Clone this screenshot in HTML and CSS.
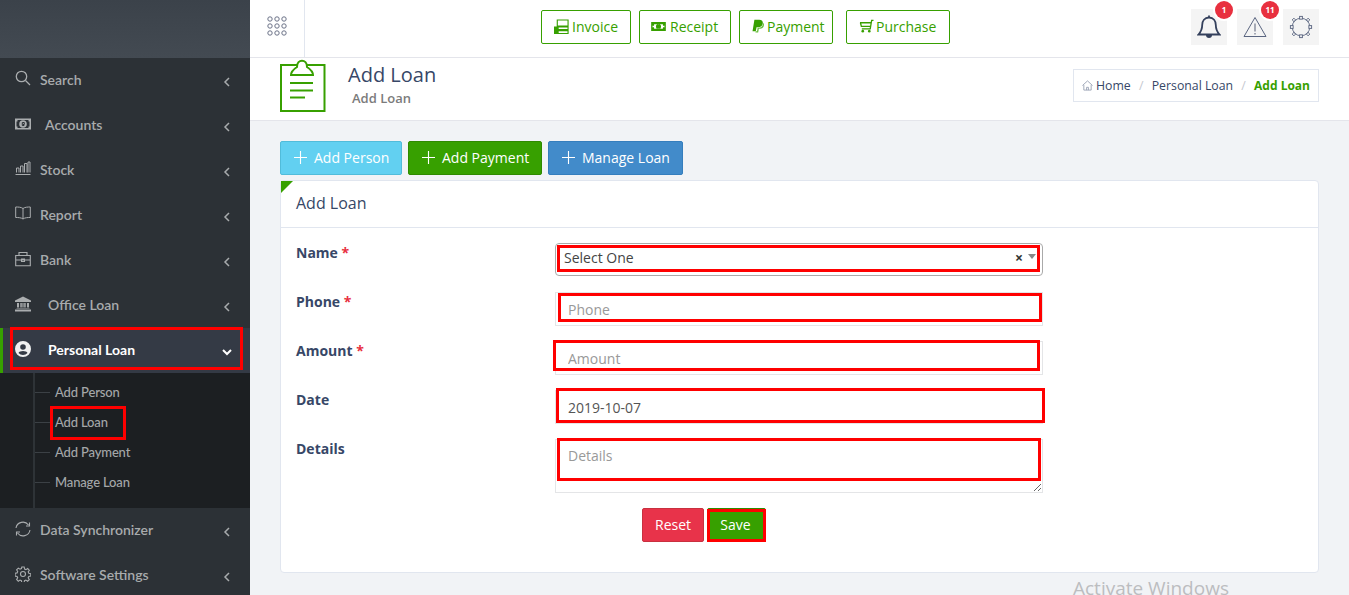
FILE: index.html
```html
<!DOCTYPE html>
<html lang="en">
<head>
<meta charset="utf-8">
<title>Add Loan</title>
<link rel="stylesheet" href="styles.css">
</head>
<body>
<div class="app">
  <aside class="sidebar">
    <div class="brand"></div>
    <nav class="menu">
      <a class="item"><svg class="ic up" viewBox="0 0 16 16"><circle cx="6.500" cy="6.500" r="5.200"/><path d="M10.500 10.500l4.500 4.500"/></svg><span>Search</span><svg class="chev" viewBox="0 0 8 12"><path d="M6 2L2 6l4 4"/></svg></a>
      <a class="item"><svg class="ic" viewBox="0 0 16 12"><path class="solid" fill-rule="evenodd" d="M0 .5h16v11H0zM2.500 2v1.500H1.500v5h1V10h11V8.500h1v-5h-1V2z"/><circle class="solid" cx="8" cy="6" r="3.800"/><path d="M9.300 4.500H7.300v3h2M9.300 4.500v2H8" stroke="#2c3136" stroke-width="1"/></svg><span class="wide1">Accounts</span><svg class="chev" viewBox="0 0 8 12"><path d="M6 2L2 6l4 4"/></svg></a>
      <a class="item"><svg class="ic up" viewBox="0 0 16 14"><path d="M0.500 13.500h15M1.500 11.500V7h2.500v4.500M5.500 11.500V5h2.500v6.500M9.500 11.500V2.500h2.500v9M13 11.500V1h2v10.500" stroke-width="1"/></svg><span>Stock</span><svg class="chev" viewBox="0 0 8 12"><path d="M6 2L2 6l4 4"/></svg></a>
      <a class="item"><svg class="ic up" viewBox="0 0 16 14"><path d="M8 2.500C6 1 3 1 .7 1v10.500c2.500 0 5.300 0 7.300 1.500 2-1.500 4.800-1.500 7.300-1.500V1C13 1 10 1 8 2.500zM8 2.500V13" stroke-width="1"/></svg><span>Report</span><svg class="chev" viewBox="0 0 8 12"><path d="M6 2L2 6l4 4"/></svg></a>
      <a class="item"><svg class="ic" viewBox="0 0 16 15"><path d="M.7 4h14.600v10.300H.7zM4 4V1h8v3M.7 8.500h14.600M6.500 7.500h3v2.500h-3z" stroke-width="1.100"/></svg><span>Bank</span><svg class="chev" viewBox="0 0 8 12"><path d="M6 2L2 6l4 4"/></svg></a>
      <a class="item"><svg class="ic" viewBox="0 0 16 15"><path class="solid" d="M8 0l8 4v1.500H0V4zM0 13h16v2H0zM1.500 11.500h13V12h-13zM2 6.500h2v4.500H2zM5.300 6.500h1.500v4.500H5.300zM9.200 6.500h1.500v4.500H9.200zM12 6.500h2v4.500h-2zM7.400 6.500h1.200v4.500H7.400z"/></svg><span class="wide2">Office Loan</span><svg class="chev" viewBox="0 0 8 12"><path d="M6 2L2 6l4 4"/></svg></a>
      <a class="item active"><svg class="ic" viewBox="0 0 16 16"><path class="solidw" fill-rule="evenodd" d="M8 0a8 8 0 1 0 0 16A8 8 0 0 0 8 0zm0 3.200a2.800 2.800 0 1 1 0 5.600 2.800 2.800 0 0 1 0-5.600zM8 14a6 6 0 0 1-4.500-2.100C4 10.700 6 10 8 10s4 .7 4.500 1.900A6 6 0 0 1 8 14z"/></svg><span class="wide2">Personal Loan</span><svg class="chev" viewBox="0 0 12 8"><path d="M2 2l4 4 4-4"/></svg><i class="mark m-active"></i></a>
      <div class="submenu">
        <a class="sub">Add Person</a>
        <a class="sub">Add Loan<i class="mark m-sub"></i></a>
        <a class="sub">Add Payment</a>
        <a class="sub">Manage Loan</a>
      </div>
      <a class="item"><svg class="ic" viewBox="0 0 16 15"><path d="M1 6.500A7 7 0 0 1 13.500 3.500M15 8.500A7 7 0 0 1 2.500 11.500M14.500 1v3.500H11M1.500 14v-3.500H5" stroke-width="1.100"/></svg><span>Data Synchronizer</span><svg class="chev" viewBox="0 0 8 12"><path d="M6 2L2 6l4 4"/></svg></a>
      <a class="item"><svg class="ic" viewBox="0 0 16 16"><circle cx="8" cy="8" r="2.500" stroke-width="1.100"/><path d="M6.800 1h2.400l.4 2 1.300.6 1.800-1.100 1.600 1.700-1.100 1.700.6 1.400 2 .4v2.400l-2 .4-.6 1.300 1.100 1.800-1.700 1.600-1.700-1.100-1.400.6-.4 2H6.800l-.4-2-1.400-.6-1.700 1.100-1.700-1.700 1.100-1.700-.6-1.300-2-.4V7.300l2-.4.600-1.400-1.100-1.700 1.700-1.700 1.700 1.100 1.400-.6z" stroke-width="1.100"/></svg><span>Software Settings</span><svg class="chev" viewBox="0 0 8 12"><path d="M6 2L2 6l4 4"/></svg></a>
    </nav>
  </aside>

  <main class="main">
    <header class="topbar">
      <div class="grid-btn">
        <svg width="20" height="20" viewBox="0 0 20 20"><g fill="none" stroke="#6b7287" stroke-width="1"><circle cx="3" cy="3" r="2.200"/><circle cx="10" cy="3" r="2.200"/><circle cx="17" cy="3" r="2.200"/><circle cx="3" cy="10" r="2.200"/><circle cx="10" cy="10" r="2.200"/><circle cx="17" cy="10" r="2.200"/><circle cx="3" cy="17" r="2.200"/><circle cx="10" cy="17" r="2.200"/><circle cx="17" cy="17" r="2.200"/></g></svg>
      </div>
      <div class="quick">
        <a class="qbtn q1"><svg viewBox="0 0 16 16" width="15" height="15"><path d="M3.500 1h11.500v6.500H3.500zM.5 8.500H15v2.800H.5zM.5 12.500H15v3H.5z" fill="none" stroke="#37a000" stroke-width="1.200"/><path d="M.5 8.500H5v7H.5z" fill="#37a000"/></svg>Invoice</a>
        <a class="qbtn q2"><svg viewBox="0 0 16 12" width="15" height="11"><path fill="#37a000" fill-rule="evenodd" d="M0 1h16v10H0zM3 3.500a1 1 0 0 1-1.500 1.500v2A1 1 0 0 1 3 8.500h10A1 1 0 0 1 14.500 7V5A1 1 0 0 1 13 3.500zM8 3.200a2.800 2.800 0 1 1 0 5.600 2.800 2.800 0 0 1 0-5.600z"/><path fill="#37a000" d="M7.500 4.500h1v3h-1z"/></svg>Receipt</a>
        <a class="qbtn q3"><svg viewBox="0 0 14 16" width="12" height="15"><path fill="#37a000" d="M2.800 0h5.600c3 0 4.700 1.600 4.200 4.400-.5 2.900-2.500 4.400-5.300 4.400H5.300l-.9 4.700H.6z"/><path fill="#6cc041" d="M12.900 3.500c1 .7 1.300 1.900 1 3.300-.5 2.500-2.200 3.700-4.500 3.700H8l-.8 4.500H4l.3-1.500h1.500l.8-4h1c2.900 0 4.900-1.600 5.300-5z"/></svg>Payment</a>
        <a class="qbtn q4"><svg viewBox="0 0 16 15" width="15" height="14"><path d="M15.500 1.500h-2l-1.500 9H3M1 4h12M1.500 4l1 4h10" fill="none" stroke="#37a000" stroke-width="1.400"/><circle cx="4" cy="13" r="1.400" fill="#37a000"/><circle cx="11" cy="13" r="1.400" fill="#37a000"/></svg>Purchase</a>
      </div>
      <div class="tools">
        <a class="tool"><svg viewBox="0 0 24 26" width="24" height="26"><path d="M12 1.500v2M12 3.500c-4.500 0-6.800 3.500-6.800 7.500 0 4-1 6.500-3.700 9.500h21c-2.700-3-3.700-5.500-3.700-9.500 0-4-2.300-7.500-6.800-7.500z" fill="none" stroke="#34405c" stroke-width="1.800"/><path d="M9 21a3 3 0 0 0 6 0z" fill="#34405c"/></svg><b class="badge">1</b></a>
        <a class="tool"><svg viewBox="0 0 24 22" width="24" height="22"><path d="M12 1.500L1 20.500h22z" fill="none" stroke="#5a6580" stroke-width="1"/><path d="M12 7.500v8M12 17v1.500" stroke="#8a90a0" stroke-width="1.500"/></svg><b class="badge">11</b></a>
        <a class="tool"><svg viewBox="0 0 26 26" width="24" height="24"><circle cx="13" cy="13" r="9.500" fill="none" stroke="#5a6580" stroke-width="1"/><g fill="#f4f4f4" stroke="#5a6580"><rect x="11.500" y="1.500" width="3" height="3"/><rect x="11.500" y="21.500" width="3" height="3"/><rect x="1.500" y="11.500" width="3" height="3"/><rect x="21.500" y="11.500" width="3" height="3"/><rect x="4" y="4" width="2.600" height="2.600" transform="rotate(45 5.300 5.300)"/><rect x="19.400" y="4" width="2.600" height="2.600" transform="rotate(45 20.700 5.300)"/><rect x="4" y="19.400" width="2.600" height="2.600" transform="rotate(45 5.300 20.700)"/><rect x="19.400" y="19.400" width="2.600" height="2.600" transform="rotate(45 20.700 20.700)"/></g></svg></a>
      </div>
    </header>

    <section class="pagehead">
      <svg class="pageicon" viewBox="0 0 46 54" width="46" height="54"><path d="M1 7h43.500v46H1z" fill="#fff" stroke="#37a000" stroke-width="2"/><path d="M11 17c0-4 3-6 6-8 0-8.500 10-8.500 10 0 3 2 6 4 6 8z" fill="#fff" stroke="#37a000" stroke-width="2"/><path d="M10 25h23M10 32.500h23M10 39.500h15" stroke="#37a000" stroke-width="2"/></svg>
      <div class="pagetitle">
        <h1>Add Loan</h1>
        <p>Add Loan</p>
      </div>
      <ol class="crumbs">
        <li><svg viewBox="0 0 12 12" width="11" height="11"><path d="M.5 6L6 1l5.500 5M2 5.500V11h8V5.500M5 11V8h2v3" fill="none" stroke="#9aa3b5" stroke-width="1"/></svg>Home</li>
        <li class="sep">/</li>
        <li>Personal Loan</li>
        <li class="sep">/</li>
        <li class="cur">Add Loan</li>
      </ol>
    </section>

    <section class="content">
      <div class="actions">
        <a class="abtn info"><svg viewBox="0 0 14 14"><path d="M7 0v14M0 7h14"/></svg>Add Person</a>
        <a class="abtn green"><svg viewBox="0 0 14 14"><path d="M7 0v14M0 7h14"/></svg>Add Payment</a>
        <a class="abtn blue"><svg viewBox="0 0 14 14"><path d="M7 0v14M0 7h14"/></svg>Manage Loan</a>
      </div>
      <div class="card">
        <i class="corner"></i>
        <div class="card-head">Add Loan</div>
        <form class="form">
          <div class="row">
            <label>Name <em>*</em></label>
            <div class="field select">
              <span>Select One</span><b class="x">×</b><i class="caret"></i>
              <i class="mark m-select"></i>
            </div>
          </div>
          <div class="row">
            <label>Phone <em>*</em></label>
            <div class="field"><input placeholder="Phone"><i class="mark m-phone"></i></div>
          </div>
          <div class="row">
            <label>Amount <em>*</em></label>
            <div class="field"><input placeholder="Amount"><i class="mark m-amount"></i></div>
          </div>
          <div class="row">
            <label>Date</label>
            <div class="field"><input value="2019-10-07"><i class="mark m-date"></i></div>
          </div>
          <div class="row">
            <label>Details</label>
            <div class="field area"><textarea placeholder="Details"></textarea><i class="mark m-details"></i></div>
          </div>
          <div class="btns">
            <button type="button" class="reset">Reset</button>
            <button type="button" class="save">Save<i class="mark m-save"></i></button>
          </div>
        </form>
      </div>
    </section>
    <div class="watermark">Activate Windows</div>
  </main>
</div>
</body>
</html>
```
FILE: styles.css
```css
* { box-sizing: border-box; }
html, body { margin: 0; height: 595px; overflow: hidden; }
body { font-family: "Open Sans", sans-serif; background: #f1f3f6; color: #374767; font-size: 14px; }
a { display: block; }
.app { display: flex; height: 595px; }

.sidebar { width: 250px; flex: none; background: #2c3136; overflow: hidden; }
.brand { height: 58px; background: linear-gradient(#3b424a, #434a52); }
.menu { display: flex; flex-direction: column; }
.item { position: relative; height: 45px; flex: none; display: flex; align-items: center; padding: 0 19px 0 15px; color: #a8abad; font: 600 14px/1 "Lato", sans-serif; }
.item span { margin: 0 0 1px 9px; flex: 1; }
.item span.wide1 { margin-left: 14px; }
.item span.wide2 { margin-left: 17px; }
.ic { width: 16px; height: 16px; fill: none; stroke: #aaadaf; stroke-width: 1.300; flex: none; margin-bottom: 3px; }
.ic.up { margin-bottom: 5px; }
.ic .solid { fill: #aaadaf; stroke: none; }
.ic .solidw { fill: #f0f0f0; stroke: none; }
.chev { width: 8px; height: 12px; fill: none; stroke: #a8abad; stroke-width: 1.500; margin-top: 3px; }
.item.active { background: #343a45; color: #fff; border-left: 3px solid #37a000; padding-left: 12px; font-weight: 700; }
.item.active .chev { width: 12px; height: 8px; stroke: #fff; stroke-width: 2; margin: 2px -2px 0 0; }
.submenu { height: 135px; flex: none; background: #1c1f22; padding-top: 4px; position: relative; }
.submenu::before { content: ""; position: absolute; left: 33px; top: 0; bottom: 0; width: 2px; background: #2e3337; }
.sub { position: relative; height: 30px; padding-left: 55px; color: #a4a7a9; font: 500 13px/30px "Lato", sans-serif; letter-spacing: -.15px; }
.sub::before { content: ""; position: absolute; left: 35px; top: 15px; width: 15px; height: 1px; background: #3b4045; }

.mark { position: absolute; border: 3px solid #f00; pointer-events: none; display: block; }
.m-active { left: 7px; top: -1px; width: 233px; height: 43px; }
.m-sub { left: 50px; top: -1px; width: 76px; height: 34px; }
.m-select { left: 1px; top: 1px; width: 483px; height: 27px; }
.m-phone { left: 3px; top: 1px; width: 484px; height: 29px; }
.m-amount { left: -2px; top: -1px; width: 487px; height: 31px; }
.m-date { left: 1px; top: -2px; width: 489px; height: 35px; }
.m-details { left: 2px; top: -1px; width: 484px; height: 43px; }
.m-save { left: -1px; top: 0; width: 59px; height: 33px; }

.main { flex: 1; min-width: 0; position: relative; display: flex; flex-direction: column; }
.topbar { height: 58px; flex: none; display: flex; background: #fff; border-bottom: 1px solid #e4e5eb; }
.grid-btn { width: 55px; flex: none; border-right: 1px solid #e1e6ef; padding: 16px 0 0 17px; }
.quick { display: flex; margin-left: 236px; padding-top: 10px; }
.qbtn { height: 34px; display: flex; align-items: center; gap: 3px; padding: 0 0 2px 12px; border: 1px solid #37a000; border-radius: 2px; background: #fff; color: #37a000; font-size: 14px; }
.q1 { width: 90px; margin-right: 8px; }
.q2 { width: 92px; margin-right: 8px; padding-left: 11px; gap: 4px; }
.q3 { width: 94px; margin-right: 13px; }
.q4 { width: 104px; gap: 2px; }
.tools { margin-left: auto; margin-right: 30px; display: flex; gap: 10px; padding-top: 9px; }
.tool { position: relative; width: 36px; height: 36px; background: #f4f4f4; display: flex; align-items: center; justify-content: center; }
.badge { position: absolute; left: 24px; top: -8px; width: 18px; height: 18px; border-radius: 50%; background: #e8303f; box-shadow: 0 0 0 2px #fff; color: #fff; font: 700 8px/18px "Open Sans", sans-serif; text-align: center; }

.pagehead { height: 63px; flex: none; position: relative; background: #fff; border-bottom: 1px solid #e4e5eb; display: flex; padding: 0 30px; }
.pagetitle { margin-left: 22px; }
.pagetitle h1 { margin: 5px 0 0; font-size: 20px; font-weight: 500; line-height: 24px; color: #374767; }
.pagetitle p { margin: 3px 0 0 4px; font-size: 13px; font-weight: 600; line-height: 16px; color: #7b7b7b; }
.crumbs { list-style: none; margin: 11px 0 0 auto; padding: 0 8px; height: 33px; width: 246px; display: flex; justify-content: space-between; align-items: center; border: 1px solid #e1e6ef; font-size: 12.300px; white-space: nowrap; }
.crumbs svg { margin-right: 3px; vertical-align: -1px; }
.crumbs .sep { color: #c5c8cf; }
.crumbs .cur { color: #37a000; font-weight: 700; font-size: 12px; }

.content { flex: 1; padding: 20px 30px 0 30px; }
.actions { display: flex; gap: 6px; height: 34px; }
.abtn { height: 34px; display: flex; align-items: center; border-radius: 2px; color: #fff; font-size: 14px; padding: 0 0 2px 13px; }
.abtn svg { width: 13px; height: 13px; fill: none; stroke: #fff; stroke-width: 1.200; margin-right: 7px; }
.info { width: 122px; background: #62d0f1; border: 1px solid #51bcda; }
.green { width: 134px; background: #37a000; border: 1px solid #2f8a00; }
.blue { width: 135px; background: #428bca; border: 1px solid #357ebd; }
.card { position: relative; margin-top: 5px; height: 393px; background: #fff; border: 1px solid #e1e6ef; border-radius: 4px; }
.corner { position: absolute; left: 0; top: 0; border-style: solid; border-width: 12px 12px 0 0; border-color: #37a000 transparent transparent transparent; }
.card-head { height: 47px; border-bottom: 1px solid #e1e6ef; padding-left: 15px; font-size: 16px; line-height: 44px; color: #374767; }
.form { padding-top: 15px; }
.row { display: flex; height: 49px; padding-left: 15px; }
.row label { width: 259px; flex: none; font-weight: 700; font-size: 14px; line-height: 20px; padding-top: 0; color: #374767; }
.row em { font-style: normal; color: #e8303f; }
.field { position: relative; width: 488px; height: 34px; }
.field input { width: 100%; height: 34px; border: 1px solid #e4e5e7; background: #fff; padding: 6px 12px; font: 14px "Open Sans", sans-serif; color: #555; border-radius: 0; display: block; }
.field input::placeholder, .field textarea::placeholder { color: #999; opacity: 1; }
.select { height: 33px; border: 1px solid #aaa; border-radius: 4px; background: #fff; padding: 3px 8px; color: #444; line-height: 22px; }
.select .x { position: absolute; right: 19px; top: 3px; color: #333; font-size: 14px; }
.select .caret { position: absolute; right: 6px; top: 10px; border: 4px solid transparent; border-top: 5px solid #888; border-bottom: 0; }
.area { height: 54px; }
.field textarea { width: 100%; height: 54px; border: 1px solid #e4e5e7; padding: 6px 12px; font: 14px "Open Sans", sans-serif; display: block; border-radius: 0; }
.btns { display: flex; gap: 3px; padding-left: 361px; margin-top: 20px; }
.btns button { position: relative; height: 34px; border-radius: 2px; color: #fff; font: 14px "Open Sans", sans-serif; padding: 0 0 2px; }
.reset { width: 62px; background: #e8334a; border: 1px solid #c9303f; }
.btns .save { width: 59px; background: #37a000; border: 1px solid #2f8a00; padding-right: 2px; }
.watermark { position: absolute; left: 823px; top: 577px; color: #bcbdc0; font: 19px/22px "Open Sans", sans-serif; white-space: nowrap; }
```
